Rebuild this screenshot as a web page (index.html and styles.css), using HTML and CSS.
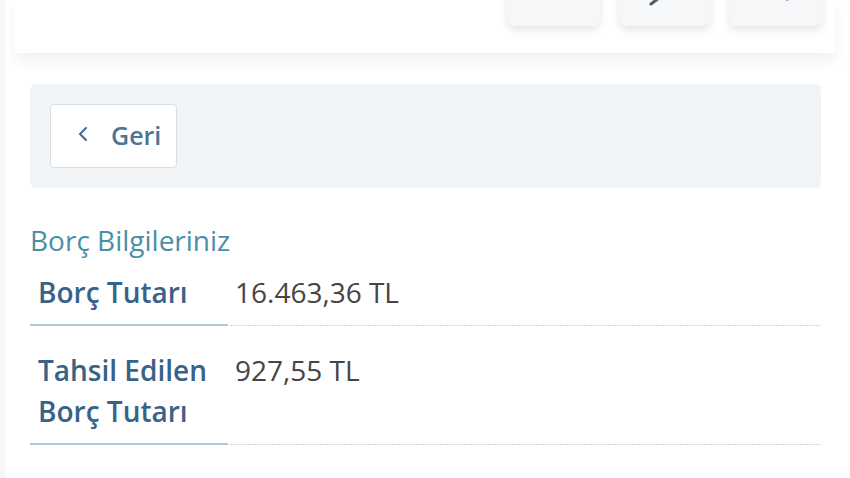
FILE: index.html
```html
<!DOCTYPE html>
<html lang="tr">
<head>
  <meta charset="UTF-8" />
  <meta name="viewport" content="width=device-width, initial-scale=1.0"/>
  <title>Borç Bilgileriniz</title>
  <link rel="stylesheet" href="styles.css">
</head>
<body>
  <div class="page">
    <div class="top-bar">
      <div class="tools">
        <div class="tool"></div>
        <div class="tool">
          <svg class="tool-icon" width="20" height="10" viewBox="0 0 20 10"><path d="M4 6 L12 0" stroke="#555b66" stroke-width="3" stroke-linecap="round"/></svg>
        </div>
        <div class="tool">
          <svg class="tool-icon" width="20" height="10" viewBox="0 0 20 10"><path d="M6 2 L10 0" stroke="#9aa0a8" stroke-width="2" stroke-linecap="round"/></svg>
        </div>
      </div>
    </div>

    <div class="content">
      <div class="back-panel">
        <button class="back-btn" type="button">
          <svg width="12" height="16" viewBox="0 0 12 16"><path d="M9 2 L3 8 L9 14" fill="none" stroke="#3f6a8e" stroke-width="2" stroke-linecap="round" stroke-linejoin="round"/></svg>
          <span>Geri</span>
        </button>
      </div>

      <h3 class="section-title">Borç Bilgileriniz</h3>
      <dl class="info-list">
        <div class="info-row">
          <dt>Borç Tutarı</dt>
          <dd>16.463,36 TL</dd>
        </div>
        <div class="info-row">
          <dt>Tahsil Edilen Borç Tutarı</dt>
          <dd>927,55 TL</dd>
        </div>
        <div class="info-row">
          <dt>Kalan Borç</dt>
          <dd>15.535,81 TL</dd>
        </div>
      </dl>
    </div>
  </div>
</body>
</html>
```

FILE: styles.css
```css
body {
  margin: 0;
  background: #fff;
  font-family: 'Open Sans', 'Noto Sans', sans-serif;
  overflow: hidden;
}
.page {
  height: 478px;
  overflow: hidden;
  border-left: 5px solid #f7f8f9;
}
/* top bar, mostly scrolled away */
.top-bar {
  height: 53px;
  margin: 0 15px 0 10px;
  background: #fff;
  box-shadow: 0 8px 14px rgba(0,0,0,0.06);
  display: flex;
  justify-content: flex-end;
  padding-right: 13px;
}
.tools {
  display: flex;
  gap: 19px;
  margin-top: -20px;
}
.tool {
  width: 93px;
  height: 46px;
  background: #f5f7f9;
  border-radius: 8px;
  box-shadow: 0 4px 8px rgba(0,0,0,0.10);
  position: relative;
  overflow: hidden;
}
.tool:nth-child(2) { width: 91px; }
.tool-icon {
  position: absolute;
  top: 18px;
  left: 28px;
}
.tool:nth-child(3) .tool-icon { left: 52px; }

.content {
  padding: 31px 29px 0 25px;
}
.back-panel {
  background: #f1f4f6;
  border-radius: 6px;
  height: 104px;
  padding: 20px;
  box-sizing: border-box;
}
.back-btn {
  width: 127px;
  height: 64px;
  background: #fff;
  border: 1px solid #dcdfe2;
  border-radius: 4px;
  display: flex;
  align-items: center;
  gap: 22px;
  padding: 0 0 0 26px;
  font-family: inherit;
  font-size: 25px;
  font-weight: 600;
  color: #4b7497;
  cursor: pointer;
}
.back-btn svg { margin-top: -4px; }
.back-btn span { margin-top: -2px; }

.section-title {
  margin: 34px 0 0;
  font-size: 28px;
  font-weight: 400;
  color: #4a8fa8;
  line-height: 36px;
}
.info-list { margin: 14px 0 0; }
.info-row {
  display: grid;
  grid-template-columns: 198px 1fr;
  padding: 0 0 13px;
  background:
    linear-gradient(#afc8d3, #afc8d3) left bottom / 198px 2px no-repeat,
    repeating-linear-gradient(90deg, #cfd6da 0 2px, transparent 2px 3px) 200px bottom / calc(100% - 200px) 1px no-repeat;
  margin-bottom: 24px;
}
.info-row dt {
  padding-left: 8px;
  font-size: 28px;
  font-weight: 600;
  color: #396288;
  line-height: 41px;
}
.info-row dd {
  margin: 0;
  padding-left: 7px;
  font-size: 28px;
  color: #454545;
  line-height: 41px;
}
```
